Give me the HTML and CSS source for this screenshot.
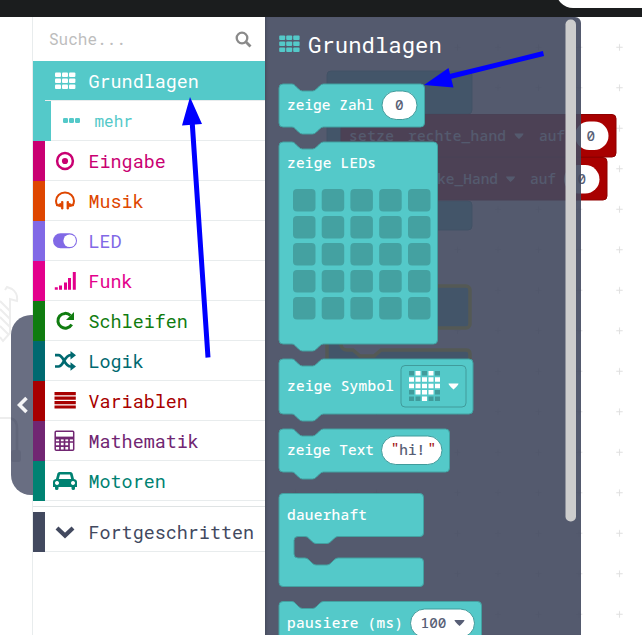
FILE: index.html
```html
<!DOCTYPE html>
<html lang="de">
<head>
<meta charset="utf-8">
<title>MakeCode</title>
<link rel="stylesheet" href="styles.css">
</head>
<body>
<div class="app">
<header class="topbar"><div class="topbar-tab"></div></header>
<div class="editor">
<aside class="simulator">
<svg class="sketch" width="33" height="618" viewBox="0 17 33 618">
<g fill="none" stroke="#ededed" stroke-width="2">
<path d="M5 290 L7 287 L12 289 Q18 293 17 301 L10 299 V333 L3 341 L0 337 M0 301 L10 311 M0 309 L10 319 M0 317 L10 327 M0 326 L8 334"/>
<path d="M0 418 H10 Q17 419 17 428 V453"/>
</g>
</svg>
<button class="collapse" aria-label="Simulator ausblenden"><svg width="12" height="18" viewBox="0 0 12 18"><path d="M9.500 2 L2.500 9 L9.500 16" fill="none" stroke="#f4f4f6" stroke-width="3.600"/></svg></button>
<svg class="sketch-shade" width="22" height="180" viewBox="11 315 22 180"><path d="M11 418.500Q17 420 17 428V453" fill="none" stroke="#61667a" stroke-width="2.500"/><rect x="11" y="450" width="10" height="12" rx="3" fill="#61667a"/></svg>
</aside>
<nav class="toolbox">
<div class="search"><span>Suche...</span><svg width="17" height="17" viewBox="0 0 17 17" fill="none" stroke="#8a8a8a"><circle cx="7" cy="7" r="5.300" stroke-width="2.300"/><path d="M10.800 10.800 L15.500 15.500" stroke-width="2.800"/></svg></div>
<div class="row basic"><i class="strip"></i><div class="item"><svg class="icon" viewBox="0 0 26 26" fill="currentColor"><g id="cells"><rect x="3" y="4.500" width="6" height="4.600" rx="1"/><rect x="10" y="4.500" width="6" height="4.600" rx="1"/><rect x="17" y="4.500" width="6.400" height="4.600" rx="1"/><rect x="3" y="10.500" width="6" height="4.600" rx="1"/><rect x="10" y="10.500" width="6" height="4.600" rx="1"/><rect x="17" y="10.500" width="6.400" height="4.600" rx="1"/><rect x="3" y="16.500" width="6" height="4.600" rx="1"/><rect x="10" y="16.500" width="6" height="4.600" rx="1"/><rect x="17" y="16.500" width="6.400" height="4.600" rx="1"/></g></svg><span>Grundlagen</span></div></div>
<div class="row more"><i class="strip"></i><div class="item"><svg class="icon" viewBox="0 0 26 26" fill="currentColor"><rect x="5" y="10" width="5" height="5" rx="1.200"/><rect x="11" y="10" width="5" height="5" rx="1.200"/><rect x="17" y="10" width="5" height="5" rx="1.200"/></svg><span>mehr</span></div></div>
<div class="row input"><i class="strip"></i><div class="item"><svg class="icon" viewBox="0 0 26 26"><circle cx="13" cy="13" r="7.900" fill="none" stroke="currentColor" stroke-width="2.500"/><circle cx="13" cy="13" r="3.100" fill="currentColor"/></svg><span>Eingabe</span></div></div>
<div class="row music"><i class="strip"></i><div class="item"><svg class="icon" viewBox="0 0 26 26"><path d="M5.500 17.500 Q4 15.500 4 13 A9 8.500 0 0 1 22 13 Q22 15.500 20.500 17.500" fill="none" stroke="currentColor" stroke-width="2"/><path d="M11 13.500v7.500H9.500V19L4 17.500 9.500 15v-1.500zM15 13.500v7.500h1.500V19l5.500-1.500-5.500-2.500v-1.500z" fill="currentColor" stroke="currentColor" stroke-width=".8"/></svg><span>Musik</span></div></div>
<div class="row led"><i class="strip"></i><div class="item"><svg class="icon" viewBox="0 0 26 26"><rect x="1" y="5.300" width="24" height="15" rx="7.500" fill="currentColor"/><circle cx="17.700" cy="12.800" r="6.300" fill="#fff"/></svg><span>LED</span></div></div>
<div class="row radio"><i class="strip"></i><div class="item"><svg class="icon" viewBox="0 0 26 26" fill="currentColor"><path d="M2.800 19.300h3v2.500h-3zM7 17.500h3v4.300H7zM12 14.500h3v7.300h-3zM16 10h3v11.800h-3zM20.800 4h3v17.800h-3z"/></svg><span>Funk</span></div></div>
<div class="row loops"><i class="strip"></i><div class="item"><svg class="icon" viewBox="0 0 26 26"><path d="M19.700 16.500 A7.400 7.400 0 1 1 18.500 7.500" fill="none" stroke="currentColor" stroke-width="3"/><path d="M22 4v8h-8z" fill="currentColor"/></svg><span>Schleifen</span></div></div>
<div class="row logic"><i class="strip"></i><div class="item"><svg class="icon" viewBox="0 0 26 26"><path d="M3 7.200h3.500c5 0 6 11.300 12 11.300H20M3 18.500h3.500c5 0 6-11.300 12-11.300H20" fill="none" stroke="currentColor" stroke-width="2.700"/><path d="M18.500 3 24 7.200l-5.500 4.300zM18.500 14.200 24 18.500 18.500 22.700z" fill="currentColor"/></svg><span>Logik</span></div></div>
<div class="row vars"><i class="strip"></i><div class="item"><svg class="icon" viewBox="0 0 26 26" fill="currentColor"><path d="M2.500 4h21.300v3.200H2.500zM2.500 8.500h21.300v3.200H2.500zM2.500 13h21.300v3.200H2.500zM2.500 17.400h21.300v3.200H2.500z"/></svg><span>Variablen</span></div></div>
<div class="row math"><i class="strip"></i><div class="item"><svg class="icon" viewBox="0 0 26 26" fill="none" stroke="currentColor"><rect x="3.200" y="3.200" width="18.500" height="19" rx="1" stroke-width="1.500"/><path d="M3 10h19" stroke-width="2.800"/><path d="M3 14h19M3 18.200h14M8 10v12M12.500 10v12M17 10v12" stroke-width="1.700"/></svg><span>Mathematik</span></div></div>
<div class="row motors"><i class="strip"></i><div class="item"><svg class="icon" viewBox="0 0 26 26"><path fill="currentColor" fill-rule="evenodd" d="M7.500 4h11q1.600 0 2.100 1.500L22 11q3 .5 3 3v5h-2v1.500q0 1.500-1.700 1.500t-1.800-1.500V19h-13v1.500Q6.500 22 4.700 22T3 20.500V19H1v-5q0-2.500 3-3l1.400-5.500Q5.900 4 7.500 4zM8 6.500 6.800 11h12.400L18 6.500zM5 13a2 2 0 1 0 .01 0M21 13a2 2 0 1 0 .01 0"/></svg><span>Motoren</span></div></div>
<div class="divider"></div>
<div class="row advanced"><i class="strip"></i><div class="item"><svg class="icon" viewBox="0 0 26 26"><path d="m5 9 8 7.500L21 9" fill="none" stroke="currentColor" stroke-width="4.200"/></svg><span>Fortgeschritten</span></div></div>
</nav>
<main class="workspace">
<svg class="canvas" width="377" height="618" viewBox="265 17 377 618">
<defs><pattern id="grid" x="599.300" y="27" width="40.500" height="40.500" patternUnits="userSpaceOnUse"><path d="M17 20.300h6.400M20.200 17v6.600" stroke="#dfdfdf" stroke-width="1"/></pattern></defs>
<rect x="265" y="17" width="377" height="618" fill="url(#grid)"/>
<g fill="#54c9c9" stroke="#43a1a1"><path d="M331 71H468q4 0 4 4V110q0 4-4 4H341V201H468q4 0 4 4V226q0 4-4 4H327V75q0-4 4-4z"/></g>
<g fill="#54c9c9" stroke="#fff200" stroke-width="3.500"><rect x="327" y="286" width="143" height="42" rx="4"/><path d="M327 328h14v17q1 5 6 5h6l7 6h14l7-6h85q4 0 4 4v26H327z"/></g>
<g fill="#a80000" stroke="#8f0000"><path d="M345 114.500H612q4 0 4 4V153q0 4-4 4H341V118q0-3.500 4-3.500z"/><path d="M341 157.500H603q4 0 4 4V196q0 4-4 4H341z"/></g>
<g fill="#fff"><rect x="575" y="121.500" width="33.500" height="28.500" rx="14.250"/><rect x="564" y="165" width="35.500" height="28.500" rx="14.250"/></g>
<g class="code"><text x="349" y="141" textLength="45">setze</text><text x="408" y="141" textLength="98">rechte_hand</text><text x="539" y="141" textLength="26">auf</text><text x="411" y="184" textLength="87">linke_Hand</text><text x="530" y="184" textLength="26">auf</text><path d="M514.500 133.500h9q0 1.500-4.500 5.500-4.500-4-4.500-5.500zM506 176.500h9q0 1.500-4.500 5.500-4.500-4-4.500-5.500z" fill="#fff"/><g class="dark"><text x="586.500" y="141">0</text><text x="577.500" y="184">0</text></g></g>
</svg>
<section class="flyout">
<h1><svg width="23" height="20" viewBox="2.800 3 23 20" fill="#54c9c9"><use href="#cells"/></svg><span>Grundlagen</span></h1>
<svg class="canvas" width="315" height="618" viewBox="265 17 315 618">
<g class="block">
<path d="M283 84h9q2 0 3.500 2l3 3q2 2 4 2h10q2 0 4-2l3-3q2-2 4-2h97q4 0 4 4v35q0 4-4 4h-97q-2 0-4 2l-3 3q-2 2-4 2h-10q-2 0-4-2l-3-3q-1.500-2-3.500-2h-9q-4 0-4-4V88q0-4 4-4z"/>
<path d="M283 142h9q2 0 3.500 2l3 3q2 2 4 2h10q2 0 4-2l3-3q2-2 4-2H433.500q4 0 4 4V340q0 4-4 4H323.500q-2 0-4 2l-3 3q-2 2-4 2h-10q-2 0-4-2l-3-3q-1.500-2-3.500-2h-9q-4 0-4-4V146q0-4 4-4z"/>
<path d="M283 359h9q2 0 3.500 2l3 3q2 2 4 2h10q2 0 4-2l3-3q2-2 4-2H469q4 0 4 4V410q0 4-4 4H323.500q-2 0-4 2l-3 3q-2 2-4 2h-10q-2 0-4-2l-3-3q-1.500-2-3.500-2h-9q-4 0-4-4V363q0-4 4-4z"/>
<path d="M283 429h9q2 0 3.500 2l3 3q2 2 4 2h10q2 0 4-2l3-3q2-2 4-2H445.500q4 0 4 4V468q0 4-4 4H323.500q-2 0-4 2l-3 3q-2 2-4 2h-10q-2 0-4-2l-3-3q-1.500-2-3.500-2h-9q-4 0-4-4V433q0-4 4-4z"/>
<path d="M283 493.500H420q3.500 0 3.500 4V533q0 3.500-3.500 3.500H338q-2 0-4 2l-3 3q-2 2-4 2H316q-2 0-4-2l-3-3q-1.500-2-4-2h-7q-4 0-4 4V554q0 4 4 4h7q2 0 4 2l3 3q2 2 4 2h11q2 0 4-2l3-3q2-2 4-2h82q3.500 0 3.500 4V583q0 3.500-3.500 3.500H283q-4 0-4-4V497.500q0-4 4-4z"/>
<path d="M283 601.500h9q2 0 3.500 2l3 3q2 2 4 2h10q2 0 4-2l3-3q2-2 4-2H477.500q4 0 4 4V640H279V605.500q0-4 4-4z"/>
</g>
<g fill="#fff" stroke="#409b9b"><rect x="382" y="91" width="35" height="28.500" rx="14.250"/><rect x="381.500" y="436" width="60.500" height="28.500" rx="14.250"/><rect x="410.500" y="609" width="64" height="28.500" rx="14.250"/></g>
<defs><g id="ledrow"><rect x="293" width="22.500" height="22.500" rx="4"/><rect x="321.700" width="22.500" height="22.500" rx="4"/><rect x="350.400" width="22.500" height="22.500" rx="4"/><rect x="379.200" width="22.500" height="22.500" rx="4"/><rect x="408" width="22.500" height="22.500" rx="4"/></g></defs>
<g fill="#44a1a1"><use href="#ledrow" y="189"/><use href="#ledrow" y="216"/><use href="#ledrow" y="243"/><use href="#ledrow" y="270"/><use href="#ledrow" y="297"/></g>
<rect x="401" y="365.500" width="65" height="41.500" rx="4" fill="none" stroke="#409b9b"/>
<path fill="#409b9b" d="M409 371h5v4.500h-5zM422 371h5v4.500h-5zM435 371h5v4.500h-5zM409 390h5v4.500h-5zM435 390h5v4.500h-5zM409 396.500h5v4.500h-5zM415.500 396.500h5v4.500h-5zM428.500 396.500h5v4.500h-5zM435 396.500h5v4.500h-5z"/>
<path fill="#fff" d="M415.500 371h5v4.500h-5zM428.500 371h5v4.500h-5zM409 377.300h5v4.500h-5zM415.500 377.300h5v4.500h-5zM422 377.300h5v4.500h-5zM428.500 377.300h5v4.500h-5zM435 377.300h5v4.500h-5zM409 383.700h5v4.500h-5zM415.500 383.700h5v4.500h-5zM422 383.700h5v4.500h-5zM428.500 383.700h5v4.500h-5zM435 383.700h5v4.500h-5zM415.500 390h5v4.500h-5zM422 390h5v4.500h-5zM428.500 390h5v4.500h-5zM422 396.500h5v4.500h-5zM448.500 383.500h10q0 1.500-5 6-5-4.500-5-6z"/>
<g class="code"><text x="287" y="110" textLength="87">zeige Zahl</text><text x="287" y="168" textLength="89">zeige LEDs</text><text x="287" y="391" textLength="107">zeige Symbol</text><text x="287" y="455" textLength="87">zeige Text</text><text x="287" y="520" textLength="80">dauerhaft</text><text x="287" y="628" textLength="116">pausiere (ms)</text>
<g class="dark"><text x="395" y="110">0</text><text x="399.300" y="455">hi!</text><text x="420.500" y="628">100</text></g><g class="quote"><text x="390.700" y="453">"</text><text x="427.500" y="453">"</text></g></g>
<path d="M454.500 620h10q0 1.500-5 6-5-4.500-5-6z" fill="#575e75"/>
<rect x="565.500" y="19.500" width="10.500" height="502" rx="5" fill="#cdcdcd"/>
</svg>
</section>
</main>
</div>
<svg class="arrows" width="642" height="635" viewBox="0 0 642 635" fill="none" stroke="#00f" stroke-width="5"><path d="M208 357.500 192.300 124M543.500 53.500 450 76.500"/><path d="M190 97l12 27-20 1.500zM424 85l24.500-17 5 19.500z" fill="#00f" stroke="none"/></svg>
</div>
</body>
</html>
```
FILE: styles.css
```css
* { box-sizing: border-box; }
body { margin: 0; font-family: "Roboto Mono", "DejaVu Sans Mono", monospace; }
.app { position: relative; width: 642px; height: 635px; overflow: hidden; background: #fff; }
.topbar { height: 17px; background: #1b1d1e; display: flex; justify-content: flex-end; overflow: hidden; }
.topbar-tab { width: 110px; height: 34px; margin-top: -26px; border-radius: 20px; margin-right: -24px; background: #fff; flex: none; }
.editor { display: flex; height: 618px; }
.simulator { position: relative; width: 32px; flex: none; }
.sketch { display: block; }
.sketch-shade { position: absolute; left: 11px; top: 298px; }
.collapse { position: absolute; left: 11px; top: 298px; width: 22px; height: 180px; padding: 0 0 0 6px; border: 0; border-radius: 20px 0 0 20px; background: #696e82; display: flex; align-items: center; }
.toolbox { width: 233px; flex: none; border-left: 1px solid #e8eced; font-size: 18.4px; }
.search { height: 44px; padding: 0 13px 0 16px; display: flex; align-items: center; justify-content: space-between; font-size: 16px; color: #bdbdbd; }
.search span { margin-top: -2px; }
.row { display: flex; height: 40px; }
.strip { width: 12px; flex: none; background: currentColor; }
.item { flex: 1; display: flex; align-items: center; padding-left: 7px; border-bottom: 1px solid #e8eced; white-space: nowrap; }
.icon { width: 26px; height: 26px; margin-right: 10.5px; flex: none; }
.basic { color: #54c9c9; }
.basic .item { background: #54c9c9; color: #fff; }
.more { color: #54c9c9; font-size: 16px; }
.more .strip { width: 18px; }
.input { color: #c90072; }
.music { color: #de4600; }
.led { color: #8169e6; }
.radio { color: #e3008c; }
.loops { color: #107c10; }
.logic { color: #006970; }
.vars { color: #a80000; }
.math { color: #712672; }
.motors { color: #008272; }
.divider { height: 6px; margin-bottom: 5px; border-bottom: 1px solid #dfe3e4; }
.advanced { color: #42495f; }
.workspace { position: relative; flex: 1; }
.canvas { display: block; }
.flyout { position: absolute; left: 0; top: 0; width: 315.500px; height: 618px; border-radius: 0 6px 0 0; background: rgba(65, 72, 94, .9); box-shadow: inset 3px 0 3px -2px #434959; }
.flyout h1 { position: absolute; left: 14px; top: 11px; margin: 0; display: flex; align-items: center; gap: 6px; height: 32px; color: #fff; font-size: 22.300px; font-weight: 400; }
.block { fill: #54c9c9; stroke: #43a1a1; stroke-width: 1; }
.code { font: 500 14.400px "Noto Sans Mono", "DejaVu Sans Mono", monospace; fill: #fff; }
.dark { fill: #575e75; }
.quote { fill: #a31515; }
.arrows { position: absolute; left: 0; top: 0; pointer-events: none; }
```
